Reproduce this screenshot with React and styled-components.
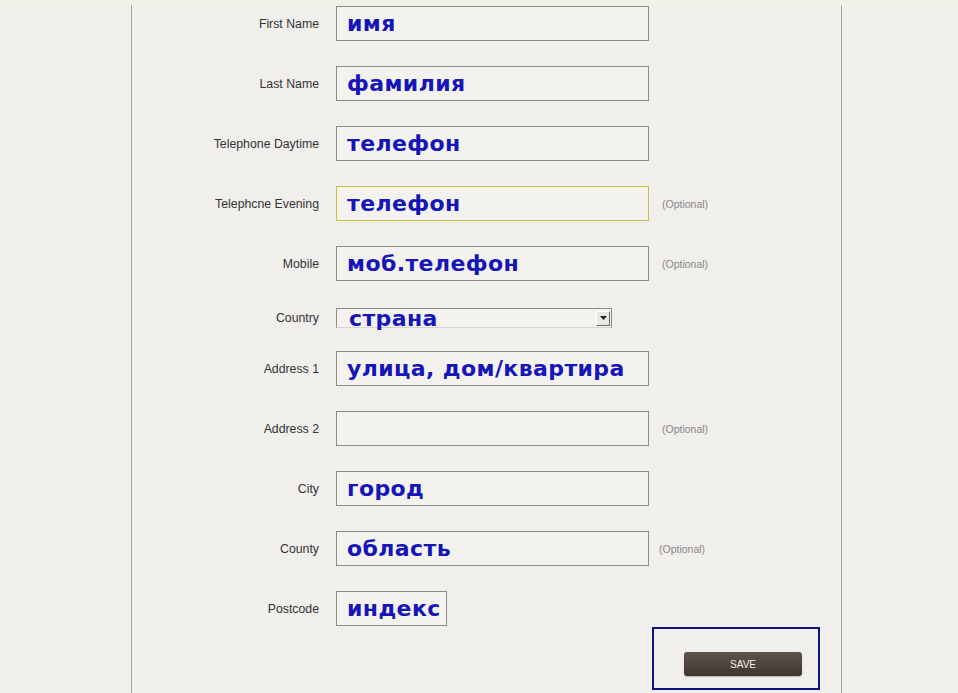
import React from "react";
import styled, { createGlobalStyle } from "styled-components";

const GlobalStyle = createGlobalStyle`
  html, body {
    margin: 0;
    padding: 0;
    background: #f0efec;
  }
  body {
    font-family: "Liberation Sans", Arial, sans-serif;
  }
`;

const fields = [
    { label: "First Name", value: "имя" },
    { label: "Last Name", value: "фамилия" },
    { label: "Telephone Daytime", value: "телефон" },
    { label: "Telephcne Evening", value: "телефон", optional: true, focused: true },
    { label: "Mobile", value: "моб.телефон", optional: true },
    { label: "Country", value: "страна", select: true },
    { label: "Address 1", value: "улица, дом/квартира" },
    { label: "Address 2", value: "", optional: true },
    { label: "City", value: "город" },
    { label: "County", value: "область", optional: true, optShift: -3 },
    { label: "Postcode", value: "индекс", short: true },
];

function App() {
    return (
        <Page>
            <GlobalStyle />
            <TopStrip />
            <Panel>
                <Form>
                    {fields.map((f) => (
                        <Row key={f.label} $compact={f.select}>
                            <Label>{f.label}</Label>
                            {f.select ? (
                                <Select>
                                    <SelectText>{f.value}</SelectText>
                                    <Arrow>
                                        <svg width="7" height="4" viewBox="0 0 7 4">
                                            <path d="M0 0h7L3.5 4z" fill="#222" />
                                        </svg>
                                    </Arrow>
                                </Select>
                            ) : (
                                <Input $short={f.short} $focused={f.focused}>
                                    {f.value}
                                </Input>
                            )}
                            {f.optional && (
                                <Optional $shift={f.optShift || 0}>(Optional)</Optional>
                            )}
                        </Row>
                    ))}
                    <SaveRow>
                        <SaveBox>
                            <SaveButton>SAVE</SaveButton>
                        </SaveBox>
                    </SaveRow>
                </Form>
            </Panel>
        </Page>
    );
}

export default App;

const Page = styled.div`
    width: 958px;
    height: 693px;
    overflow: hidden;
    position: relative;
    background: #f0efec;
`;
const TopStrip = styled.div`
    position: absolute;
    left: 0;
    top: 0;
    width: 100%;
    height: 5px;
    background: #f2f1e7;
`;
const Panel = styled.div`
    margin-left: 131px;
    width: 711px;
    height: 693px;
    border-left: 1px solid #a9a6a2;
    border-right: 1px solid #a9a6a2;
    box-sizing: border-box;
`;
const Form = styled.div`
    display: flex;
    flex-direction: column;
    gap: 25px;
    padding-top: 6px;
`;
const Row = styled.div`
    display: flex;
    align-items: center;
    height: ${(p) => (p.$compact ? "20px" : "35px")};
    margin: ${(p) => (p.$compact ? "2px 0 -2px" : "0")};
`;
const Label = styled.div`
    width: 187px;
    flex-shrink: 0;
    text-align: right;
    font-size: 12.3px;
    color: #333;
    margin-right: 17px;
`;
const Input = styled.div`
    width: ${(p) => (p.$short ? "111px" : "313px")};
    height: 35px;
    box-sizing: border-box;
    border: 1px solid ${(p) => (p.$focused ? "#c9c23c" : "#8e8a86")};
    background: #f3f2ef;
    padding: 0 0 0 10px;
    display: flex;
    align-items: center;
    font-family: "DejaVu Sans", Verdana, sans-serif;
    font-weight: bold;
    font-size: 22px;
    letter-spacing: 0.4px;
    color: #1515b8;
    white-space: nowrap;
    overflow: visible;
`;
const Select = styled.div`
    width: 276px;
    height: 20px;
    box-sizing: border-box;
    border: 1px solid #8e8a86;
    border-bottom-color: #d6d4d0;
    background: #f3f2ef;
    position: relative;
    display: flex;
    justify-content: flex-end;
    align-items: center;
    padding-right: 1px;
`;
const SelectText = styled.span`
    position: absolute;
    left: 12px;
    top: -5px;
    font-family: "DejaVu Sans", Verdana, sans-serif;
    font-weight: bold;
    font-size: 22px;
    letter-spacing: 0.4px;
    color: #1515b8;
    line-height: 29px;
`;
const Arrow = styled.div`
    width: 14px;
    height: 15px;
    box-sizing: border-box;
    background: #e9e7e3;
    border: 1px solid;
    border-color: #fff #6e6b68 #6e6b68 #fff;
    display: flex;
    align-items: center;
    justify-content: center;
`;
const Optional = styled.div`
    margin-left: ${(p) => 13 + p.$shift}px;
    font-size: 10.5px;
    color: #8a8885;
`;
const SaveRow = styled.div`
    display: flex;
    padding-left: 520px;
    margin-top: -24px;
`;
const SaveBox = styled.div`
    width: 168px;
    height: 63px;
    box-sizing: border-box;
    border: 2px solid #10107e;
    padding: 23px 0 0 30px;
`;
const SaveButton = styled.div`
    width: 118px;
    height: 24px;
    border-radius: 3px;
    background: linear-gradient(#5d524c, #40352f);
    box-shadow: 0 1px 1px rgba(0, 0, 0, 0.25);
    color: #f2efec;
    font-size: 10px;
    display: flex;
    align-items: center;
    justify-content: center;
`;
